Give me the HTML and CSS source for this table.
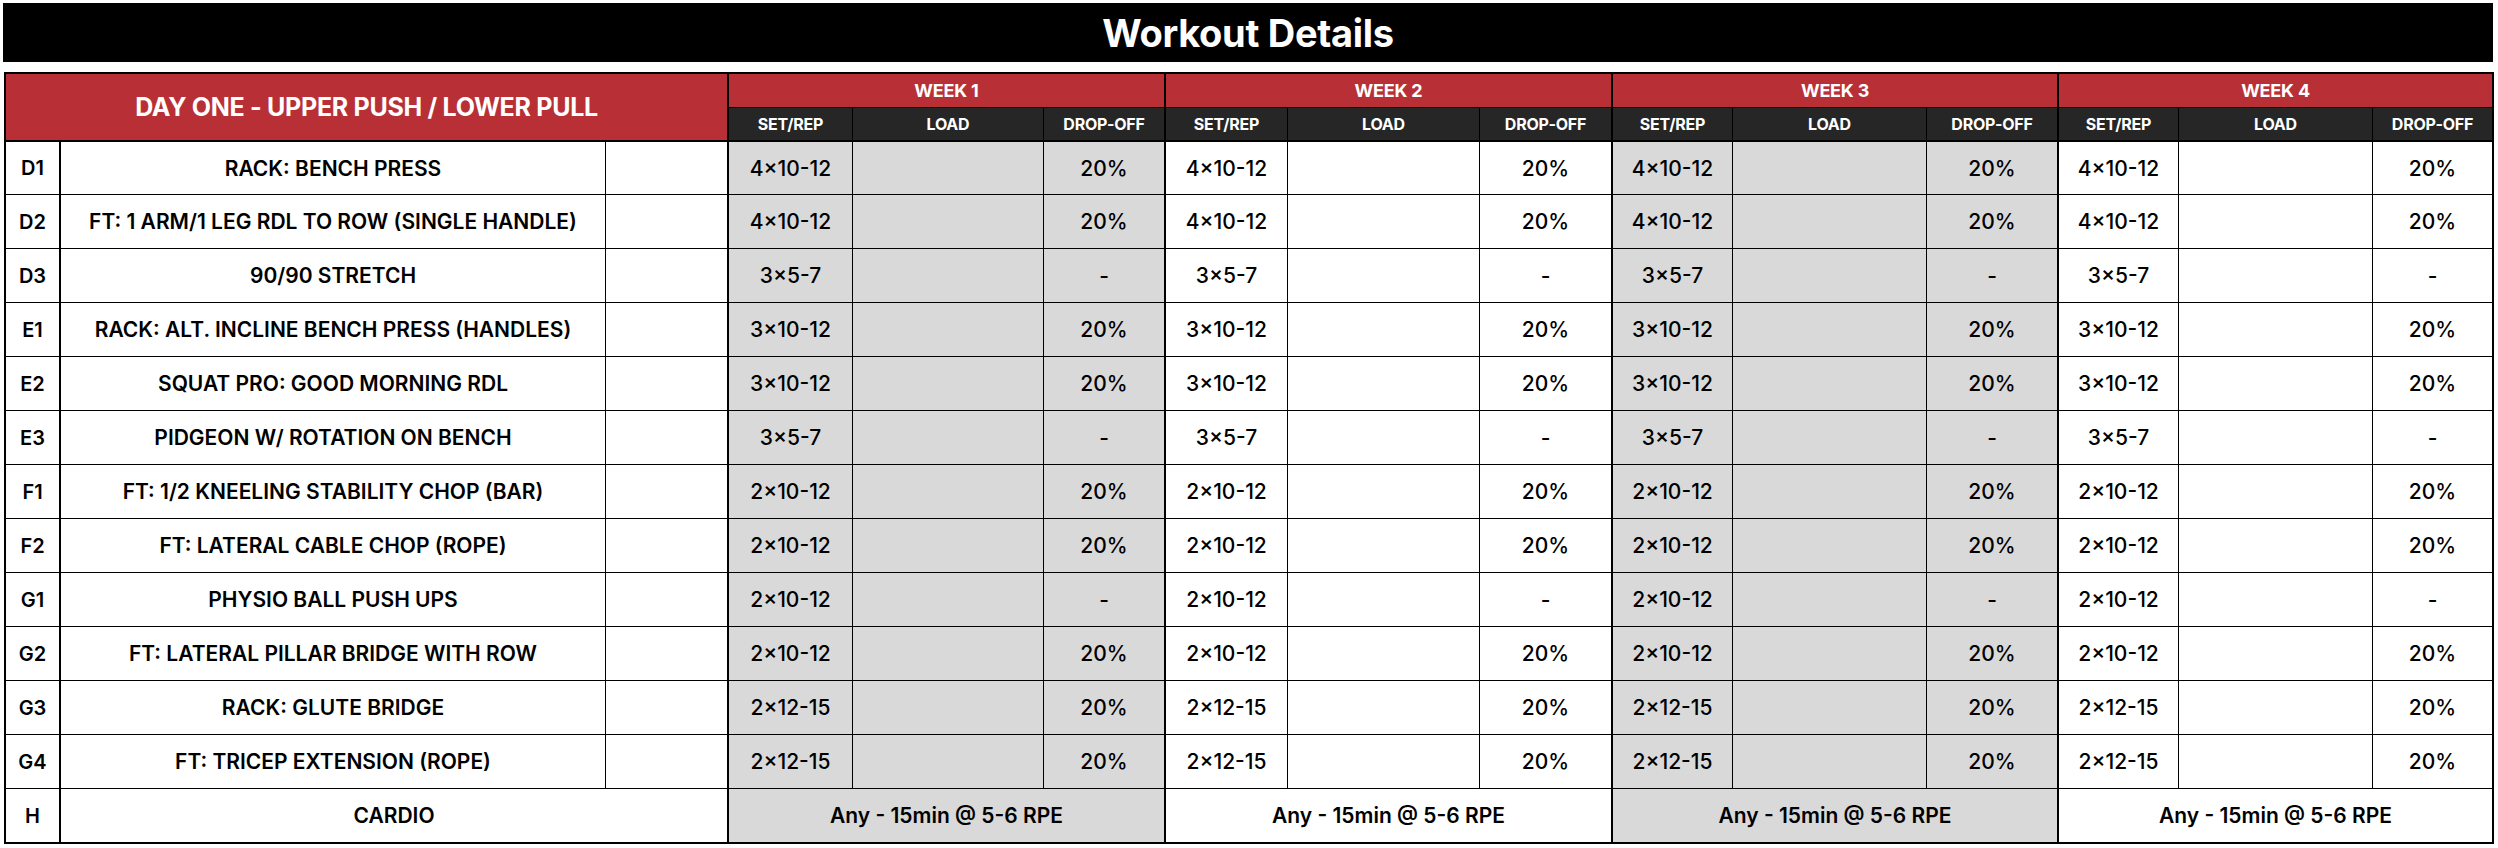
FILE: index.html
```html
<!DOCTYPE html>
<html lang="en">
<head>
<meta charset="utf-8">
<title>Workout Details</title>
<link rel="stylesheet" href="styles.css">
</head>
<body>
<div class="sheet">
  <div class="title">Workout Details</div>
  <div class="grid">
    <div class="day">DAY ONE - UPPER PUSH / LOWER PULL</div>
    <div class="week">WEEK 1</div>
    <div class="week">WEEK 2</div>
    <div class="week">WEEK 3</div>
    <div class="week last">WEEK 4</div>

    <div class="sub">SET/REP</div><div class="sub">LOAD</div><div class="sub end">DROP-OFF</div>
    <div class="sub">SET/REP</div><div class="sub">LOAD</div><div class="sub end">DROP-OFF</div>
    <div class="sub">SET/REP</div><div class="sub">LOAD</div><div class="sub end">DROP-OFF</div>
    <div class="sub">SET/REP</div><div class="sub">LOAD</div><div class="sub last">DROP-OFF</div>

    <div class="c id">D1</div><div class="c name">RACK: BENCH PRESS</div><div class="c blank"></div>
    <div class="c g">4×10-12</div><div class="c g"></div><div class="c g end">20%</div>
    <div class="c">4×10-12</div><div class="c"></div><div class="c end">20%</div>
    <div class="c g">4×10-12</div><div class="c g"></div><div class="c g end">20%</div>
    <div class="c">4×10-12</div><div class="c"></div><div class="c last">20%</div>

    <div class="c id">D2</div><div class="c name">FT: 1 ARM/1 LEG RDL TO ROW (SINGLE HANDLE)</div><div class="c blank"></div>
    <div class="c g">4×10-12</div><div class="c g"></div><div class="c g end">20%</div>
    <div class="c">4×10-12</div><div class="c"></div><div class="c end">20%</div>
    <div class="c g">4×10-12</div><div class="c g"></div><div class="c g end">20%</div>
    <div class="c">4×10-12</div><div class="c"></div><div class="c last">20%</div>

    <div class="c id">D3</div><div class="c name">90/90 STRETCH</div><div class="c blank"></div>
    <div class="c g">3×5-7</div><div class="c g"></div><div class="c g end">-</div>
    <div class="c">3×5-7</div><div class="c"></div><div class="c end">-</div>
    <div class="c g">3×5-7</div><div class="c g"></div><div class="c g end">-</div>
    <div class="c">3×5-7</div><div class="c"></div><div class="c last">-</div>

    <div class="c id">E1</div><div class="c name">RACK: ALT. INCLINE BENCH PRESS (HANDLES)</div><div class="c blank"></div>
    <div class="c g">3×10-12</div><div class="c g"></div><div class="c g end">20%</div>
    <div class="c">3×10-12</div><div class="c"></div><div class="c end">20%</div>
    <div class="c g">3×10-12</div><div class="c g"></div><div class="c g end">20%</div>
    <div class="c">3×10-12</div><div class="c"></div><div class="c last">20%</div>

    <div class="c id">E2</div><div class="c name">SQUAT PRO: GOOD MORNING RDL</div><div class="c blank"></div>
    <div class="c g">3×10-12</div><div class="c g"></div><div class="c g end">20%</div>
    <div class="c">3×10-12</div><div class="c"></div><div class="c end">20%</div>
    <div class="c g">3×10-12</div><div class="c g"></div><div class="c g end">20%</div>
    <div class="c">3×10-12</div><div class="c"></div><div class="c last">20%</div>

    <div class="c id">E3</div><div class="c name">PIDGEON W/ ROTATION ON BENCH</div><div class="c blank"></div>
    <div class="c g">3×5-7</div><div class="c g"></div><div class="c g end">-</div>
    <div class="c">3×5-7</div><div class="c"></div><div class="c end">-</div>
    <div class="c g">3×5-7</div><div class="c g"></div><div class="c g end">-</div>
    <div class="c">3×5-7</div><div class="c"></div><div class="c last">-</div>

    <div class="c id">F1</div><div class="c name">FT: 1/2 KNEELING STABILITY CHOP (BAR)</div><div class="c blank"></div>
    <div class="c g">2×10-12</div><div class="c g"></div><div class="c g end">20%</div>
    <div class="c">2×10-12</div><div class="c"></div><div class="c end">20%</div>
    <div class="c g">2×10-12</div><div class="c g"></div><div class="c g end">20%</div>
    <div class="c">2×10-12</div><div class="c"></div><div class="c last">20%</div>

    <div class="c id">F2</div><div class="c name">FT: LATERAL CABLE CHOP (ROPE)</div><div class="c blank"></div>
    <div class="c g">2×10-12</div><div class="c g"></div><div class="c g end">20%</div>
    <div class="c">2×10-12</div><div class="c"></div><div class="c end">20%</div>
    <div class="c g">2×10-12</div><div class="c g"></div><div class="c g end">20%</div>
    <div class="c">2×10-12</div><div class="c"></div><div class="c last">20%</div>

    <div class="c id">G1</div><div class="c name">PHYSIO BALL PUSH UPS</div><div class="c blank"></div>
    <div class="c g">2×10-12</div><div class="c g"></div><div class="c g end">-</div>
    <div class="c">2×10-12</div><div class="c"></div><div class="c end">-</div>
    <div class="c g">2×10-12</div><div class="c g"></div><div class="c g end">-</div>
    <div class="c">2×10-12</div><div class="c"></div><div class="c last">-</div>

    <div class="c id">G2</div><div class="c name">FT: LATERAL PILLAR BRIDGE WITH ROW</div><div class="c blank"></div>
    <div class="c g">2×10-12</div><div class="c g"></div><div class="c g end">20%</div>
    <div class="c">2×10-12</div><div class="c"></div><div class="c end">20%</div>
    <div class="c g">2×10-12</div><div class="c g"></div><div class="c g end">20%</div>
    <div class="c">2×10-12</div><div class="c"></div><div class="c last">20%</div>

    <div class="c id">G3</div><div class="c name">RACK: GLUTE BRIDGE</div><div class="c blank"></div>
    <div class="c g">2×12-15</div><div class="c g"></div><div class="c g end">20%</div>
    <div class="c">2×12-15</div><div class="c"></div><div class="c end">20%</div>
    <div class="c g">2×12-15</div><div class="c g"></div><div class="c g end">20%</div>
    <div class="c">2×12-15</div><div class="c"></div><div class="c last">20%</div>

    <div class="c id">G4</div><div class="c name">FT: TRICEP EXTENSION (ROPE)</div><div class="c blank"></div>
    <div class="c g">2×12-15</div><div class="c g"></div><div class="c g end">20%</div>
    <div class="c">2×12-15</div><div class="c"></div><div class="c end">20%</div>
    <div class="c g">2×12-15</div><div class="c g"></div><div class="c g end">20%</div>
    <div class="c">2×12-15</div><div class="c"></div><div class="c last">20%</div>

    <div class="c id bottom">H</div><div class="c name wide bottom">CARDIO</div>
    <div class="c g span3 end bottom">Any - 15min @ 5-6 RPE</div>
    <div class="c span3 end bottom">Any - 15min @ 5-6 RPE</div>
    <div class="c g span3 end bottom">Any - 15min @ 5-6 RPE</div>
    <div class="c span3 last bottom">Any - 15min @ 5-6 RPE</div>
  </div>
</div>
</body>
</html>
```

FILE: styles.css
```css
* {
  box-sizing: border-box;
}

html, body {
  margin: 0;
  padding: 0;
  background: #ffffff;
}

body {
  font-family: Inter, "Liberation Sans", Arial, sans-serif;
  color: #000000;
}

.sheet {
  padding: 3px 0 0 3px;
  width: 2498px;
}

.title {
  width: 2490px;
  height: 59px;
  background: #000000;
  color: #ffffff;
  font-size: 38px;
  font-weight: 700;
  display: flex;
  align-items: center;
  justify-content: center;
  letter-spacing: -0.3px;
}

.grid {
  margin: 10px 0 0 1px;
  width: 2490px;
  border: 2px solid #000000;
  display: grid;
  grid-template-columns: 55px 545px 123px 124px 191px 122px 122px 192px 133px 120px 194px 132px 120px 194px 119px;
  grid-template-rows: 34px 34px 53px repeat(11, 54px) 53px;
}

.day {
  grid-column: 1 / 4;
  grid-row: 1 / 3;
  background: #b83035;
  color: #ffffff;
  font-size: 25px;
  font-weight: 700;
  display: flex;
  align-items: center;
  justify-content: center;
  border-right: 2px solid #000000;
  border-bottom: 2px solid #000000;
  letter-spacing: -0.3px;
}

.week {
  grid-column: span 3;
  background: #b83035;
  color: #ffffff;
  font-size: 18px;
  font-weight: 700;
  display: flex;
  align-items: center;
  justify-content: center;
  border-right: 2px solid #000000;
  border-bottom: 1px solid #000000;
  letter-spacing: -0.2px;
}

.sub {
  background: #262626;
  color: #ffffff;
  font-size: 16px;
  font-weight: 700;
  display: flex;
  align-items: center;
  justify-content: center;
  border-right: 1px solid #000000;
  border-bottom: 2px solid #000000;
  letter-spacing: -0.2px;
}

.c {
  display: flex;
  align-items: center;
  justify-content: center;
  font-size: 21px;
  font-weight: 500;
  border-right: 1px solid #000000;
  border-bottom: 1px solid #000000;
  background: #ffffff;
}

.c.g {
  background: #d9d9d9;
}

.id {
  font-weight: 600;
  font-size: 20px;
  border-right-width: 2px;
}

.name {
  font-weight: 600;
  font-size: 21px;
}

.blank,
.end {
  border-right-width: 2px;
}

.sub.end {
  border-right-width: 2px;
}

.last,
.sub.last,
.week.last {
  border-right: none;
}

.wide {
  grid-column: span 2;
  border-right-width: 2px;
}

.span3 {
  grid-column: span 3;
  font-weight: 600;
}

.bottom {
  border-bottom: none;
}
```
